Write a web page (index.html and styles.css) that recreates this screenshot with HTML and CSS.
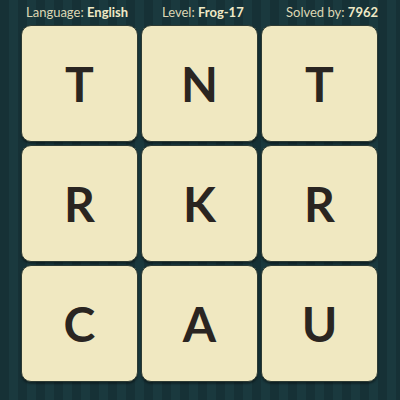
FILE: index.html
```html
<!DOCTYPE html>
<html>
<head>
<meta charset="utf-8">
<link rel="stylesheet" href="styles.css">
</head>
<body>
<div class="page">
  <div class="header">
    <div class="info lang">Language: <b>English</b></div>
    <div class="info level">Level: <b>Frog-17</b></div>
    <div class="info solved">Solved by: <b>7962</b></div>
  </div>
  <div class="grid">
    <div class="tile">T</div>
    <div class="tile">N</div>
    <div class="tile">T</div>
    <div class="tile">R</div>
    <div class="tile">K</div>
    <div class="tile">R</div>
    <div class="tile">C</div>
    <div class="tile">A</div>
    <div class="tile">U</div>
  </div>
</div>
</body>
</html>
```
FILE: styles.css
```css
html, body {
  margin: 0;
  padding: 0;
}
body {
  width: 400px;
  height: 400px;
  overflow: hidden;
  background: repeating-linear-gradient(90deg, #163136 0px, #163136 9px, #1a393e 9px, #1a393e 18px);
  font-family: Lato, "Open Sans", sans-serif;
}
.page {
  width: 400px;
  height: 400px;
}
.header {
  height: 25px;
  display: flex;
  align-items: center;
  color: #dcd6b4;
  font-size: 13px;
  padding-left: 26px;
  padding-bottom: 2px;
  box-sizing: border-box;
}
.info {
  white-space: nowrap;
  flex-shrink: 0;
}
.info b {
  color: #efe9c6;
  font-weight: 700;
}
.lang { width: 136px; }
.level { width: 124px; }
.grid {
  display: grid;
  grid-template-columns: repeat(3, 117px);
  grid-template-rows: repeat(3, 117px);
  gap: 3px;
  padding-left: 21px;
}
.tile {
  box-sizing: border-box;
  background: #f0e8c1;
  border: 1px solid #2d3a33;
  border-radius: 10px;
  box-shadow: 0 2px 2px rgba(0,0,0,0.35);
  display: flex;
  align-items: center;
  justify-content: center;
  color: #2a2521;
  font-size: 48px;
  font-weight: 700;
}
```
